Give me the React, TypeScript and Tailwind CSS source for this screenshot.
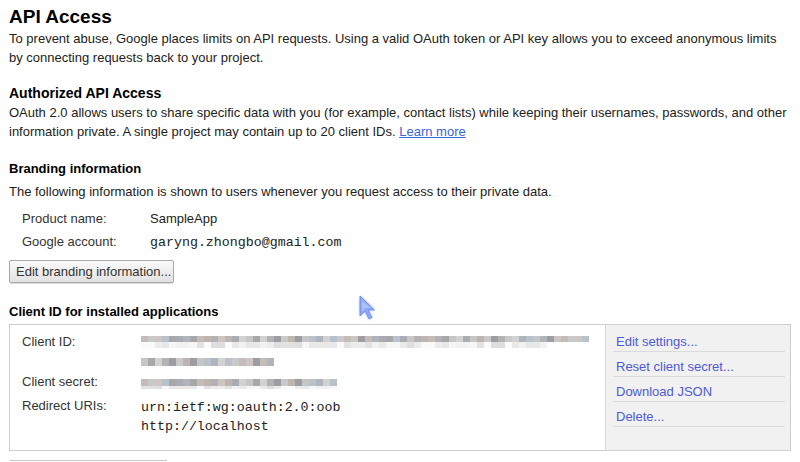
import React from 'react';

// Pixelated "redacted" strips for the client id / secret values
const DARK = ['#c6c6c6', '#b3b3b6', '#a9adb3', '#c4bcb6', '#b8c2cc', '#9d9da3', '#d2d2d2', '#bdb5ae', '#a8a8a8', '#cdc6c2', '#b0b5bd', '#c9c9c9'];
const LIGHT = ['#ececec', '#f2f2f2', '#e2e2e2', '#f6f6f6', '#dedede', '#ebe8e6', '#fafafa', '#e6e9ec'];

function strip(count: number, palette: string[], seed: number) {
  return Array.from({ length: count }, (_, i) => palette[(i * 7 + seed * 3 + ((i * i) % 5)) % palette.length]);
}

function Pixels({ colors, h }: { colors: string[]; h: number }) {
  return (
    <div className="flex blur-[0.5px]">
      {colors.map((c, i) => (
        <div key={i} className="w-[7px] shrink-0" style={{ backgroundColor: c, height: h }} />
      ))}
    </div>
  );
}

function Cursor() {
  return (
    <svg className="absolute left-[355px] top-[292px]" width="24" height="32" viewBox="0 0 24 32">
      <defs>
        <filter id="glow" x="-50%" y="-50%" width="200%" height="200%">
          <feGaussianBlur stdDeviation="1.6" />
        </filter>
      </defs>
      <path d="M5 4 L5 24 L10 19 L14 27 L17 25.5 L13 18 L19.5 18 Z" fill="#7f9cf5" opacity="0.8" filter="url(#glow)" />
      <path d="M5 4 L5 24 L10 19 L14 27 L17 25.5 L13 18 L19.5 18 Z" fill="#8eaaf7" stroke="#6b85e8" strokeWidth="0.8" />
      <path d="M7 9 L7 19.5 L10.5 16 L16 16 Z" fill="#b9cbfb" opacity="0.7" />
    </svg>
  );
}

function InfoRow({ label, children }: { label: string; children: React.ReactNode }) {
  return (
    <div className="flex h-[23px] leading-[23px]">
      <div className="w-[141px] pl-[13px] text-[#333]">{label}</div>
      <div>{children}</div>
    </div>
  );
}

function ActionLink({ children }: { children: React.ReactNode }) {
  return (
    <div className="pt-[5px] border-b border-[#dadada]">
      <a href="#" className="text-[#4e5ad6] leading-[19px] block pl-[3px]">
        {children}
      </a>
    </div>
  );
}

export default function App() {
  return (
    <div className="relative w-[800px] h-[462px] overflow-hidden bg-white font-['Liberation_Sans',Arial,sans-serif] text-[13px] leading-[19px] text-[#222] px-[9px] pt-[6px]">
      <h1 className="text-[19px] font-bold leading-[22px] text-black">API Access</h1>
      <p className="mt-[1px]">
        To prevent abuse, Google places limits on API requests. Using a valid OAuth token or API key allows you to exceed anonymous limits by connecting requests back to your project.
      </p>

      <h2 className="mt-[17px] text-[14px] font-bold leading-[18px] text-black">Authorized API Access</h2>
      <p className="mt-[1px]">
        OAuth 2.0 allows users to share specific data with you (for example, contact lists) while keeping their usernames, passwords, and other information private. A single project may contain up to 20 client IDs.{' '}
        <a href="#" className="text-[#3d63d8] underline">Learn more</a>
      </p>

      <h3 className="mt-[19px] text-[13px] font-bold leading-[18px] text-black">Branding information</h3>
      <p className="mt-[4px]">The following information is shown to users whenever you request access to their private data.</p>

      <div className="mt-[6px]">
        <InfoRow label="Product name:">SampleApp</InfoRow>
        <InfoRow label="Google account:">
          <span className="font-['Liberation_Mono','Courier_New',monospace] text-[13.3px]">garyng.zhongbo@gmail.com</span>
        </InfoRow>
      </div>

      <button className="mt-[7px] block h-[23px] w-[165px] whitespace-nowrap rounded-[2px] border border-[#a9a9a9] bg-gradient-to-b from-[#fafafa] to-[#e2e2e2] px-[6px] text-left text-[13px] leading-[21px] text-[#333] shadow-[0_1px_1px_rgba(0,0,0,0.15)]">
        Edit branding information...
      </button>

      <h3 className="mt-[20px] text-[13px] font-bold leading-[18px] text-black">Client ID for installed applications</h3>

      <div className="mt-[3px] flex h-[127px] border border-[#cfcfcf]">
        <div className="flex-1 pt-[7px] pl-[12px]">
          <div className="flex h-[40px]">
            <div className="w-[119px] text-[#333]">Client ID:</div>
            <div className="pt-[4px]">
              <Pixels colors={strip(64, DARK, 1)} h={6} />
              <Pixels colors={strip(58, LIGHT, 2)} h={6} />
              <div className="mt-[10px]">
                <Pixels colors={strip(19, DARK, 4)} h={8} />
              </div>
            </div>
          </div>
          <div className="flex h-[24px]">
            <div className="w-[119px] text-[#333]">Client secret:</div>
            <div className="pt-[7px]">
              <Pixels colors={strip(28, DARK, 5)} h={7} />
              <Pixels colors={strip(28, LIGHT, 6)} h={3} />
            </div>
          </div>
          <div className="flex">
            <div className="w-[119px] text-[#333]">Redirect URIs:</div>
            <div className="font-['Liberation_Mono','Courier_New',monospace] text-[13.3px] leading-[19px] pt-[2px]">
              <div>urn:ietf:wg:oauth:2.0:oob</div>
              <div>http://localhost</div>
            </div>
          </div>
        </div>
        <div className="w-[185px] border-l border-[#d6d6d6] bg-[#f1f1f1] pt-[2px] pl-[7px] pr-[5px]">
          <ActionLink>Edit settings...</ActionLink>
          <ActionLink>Reset client secret...</ActionLink>
          <ActionLink>Download JSON</ActionLink>
          <ActionLink>Delete...</ActionLink>
        </div>
      </div>

      <div className="mt-[9px] ml-[1px] w-[157px] border-t border-[#c8c8c8]" />

      <Cursor />
    </div>
  );
}
